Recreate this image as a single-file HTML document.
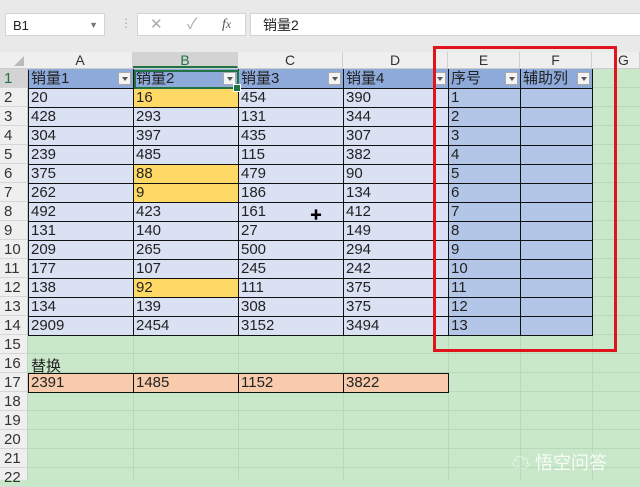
<!DOCTYPE html><html><head><meta charset="utf-8"><style>
body{margin:0;width:640px;height:480px;overflow:hidden;position:relative;background:#c8e8c9;font-family:"Liberation Sans","Noto Sans CJK SC",sans-serif;}
.a{position:absolute}
#top{left:0;top:0;width:640px;height:52px;background:#e9e9e9}
.box{position:absolute;background:#fff;border:1px solid #d4d4d4}
#grid{left:28px;top:69px;width:612px;height:411px;background:repeating-linear-gradient(to bottom,transparent 0,transparent 18px,#b7d8b9 18px,#b7d8b9 19px)}
.vl{position:absolute;top:52px;width:1px;height:428px;background:#b7d8b9}
#colh{left:0;top:52px;width:640px;height:17px;background:#efefef;border-bottom:1px solid #ccc;box-sizing:border-box}
.ch{position:absolute;top:52px;height:16px;line-height:17px;text-align:center;font-size:14px;color:#333;border-right:1px solid #d0d0d0;box-sizing:border-box}
#rowh{left:0;top:69px;width:28px;height:411px;background:#efefef;border-right:1px solid #ccc;box-sizing:border-box}
.rh{position:absolute;left:0;width:27px;height:19px;line-height:19px;font-size:15px;color:#333;text-align:left;padding-left:4px;box-sizing:border-box;border-bottom:1px solid #d6d6d6}
table{position:absolute;left:28px;top:69px;border-collapse:collapse;table-layout:fixed}
td{height:18px;padding:0 0 0 2px;border:1px solid #111;font-size:15px;line-height:18px;color:#222;background:#dae1f3;white-space:nowrap;overflow:hidden;position:relative}
tr.h td{background:#8eaadb;border-color:#8eaadb #111 #111 #111}
td.e{background:#b4c6e7}
td.y{background:#ffd966}
td.o{background:#f8cbad}
.dd{position:absolute;right:2px;top:2px;width:13px;height:13px;background:#f4f4f4;border:1px solid #aaa;box-sizing:border-box}
.dd:after{content:"";position:absolute;left:3px;top:4px;border-left:3px solid transparent;border-right:3px solid transparent;border-top:4px solid #555}
</style></head><body>
<div class="a" id="top"></div>
<div class="box" style="left:5px;top:13px;width:100px;height:23px;font-size:13px;line-height:23px;padding-left:7px;box-sizing:border-box;color:#222">B1<span style="position:absolute;right:6px;top:0;font-size:9px;color:#777">▼</span></div>
<div class="a" style="left:120px;top:16px;color:#aaa;font-size:12px">⋮</div>
<div class="box" style="left:137px;top:13px;width:109px;height:23px;box-sizing:border-box;font-size:15px;color:#aaa;line-height:22px"><span style="position:absolute;left:12px">✕</span><span style="position:absolute;left:49px">✓</span><span style="position:absolute;left:84px;font-family:'Liberation Serif',serif;font-style:italic;color:#555;font-size:14px">f<small>x</small></span></div>
<div class="box" style="left:250px;top:13px;width:400px;height:23px;box-sizing:border-box;font-size:14px;line-height:22px;padding-left:12px;color:#222">销量2</div>
<div class="a" id="grid"></div>
<div class="vl" style="left:133px"></div><div class="vl" style="left:238px"></div><div class="vl" style="left:343px"></div><div class="vl" style="left:448px"></div><div class="vl" style="left:520px"></div><div class="vl" style="left:592px"></div>
<div class="a" id="colh"></div>
<div class="a" style="left:0;top:52px;width:28px;height:16px;background:#efefef"><div style="position:absolute;right:4px;bottom:2px;border-left:10px solid transparent;border-bottom:10px solid #bbb"></div></div>
<div class="ch" style="left:28px;width:105px">A</div>
<div class="ch" style="left:133px;width:105px;background:#d3d3d3;color:#217346;border-bottom:2px solid #217346">B</div>
<div class="ch" style="left:238px;width:105px">C</div>
<div class="ch" style="left:343px;width:105px">D</div>
<div class="ch" style="left:448px;width:72px">E</div>
<div class="ch" style="left:520px;width:72px">F</div>
<div class="ch" style="left:592px;width:48px;text-align:left;padding-left:26px">G</div>
<div class="a" id="rowh">
<div class="rh" style="top:0;color:#217346;background:#d3d3d3">1</div><div class="rh" style="top:19px">2</div><div class="rh" style="top:38px">3</div><div class="rh" style="top:57px">4</div><div class="rh" style="top:76px">5</div><div class="rh" style="top:95px">6</div><div class="rh" style="top:114px">7</div><div class="rh" style="top:133px">8</div><div class="rh" style="top:152px">9</div><div class="rh" style="top:171px">10</div><div class="rh" style="top:190px">11</div><div class="rh" style="top:209px">12</div><div class="rh" style="top:228px">13</div><div class="rh" style="top:247px">14</div><div class="rh" style="top:266px">15</div><div class="rh" style="top:285px">16</div><div class="rh" style="top:304px">17</div><div class="rh" style="top:323px">18</div><div class="rh" style="top:342px">19</div><div class="rh" style="top:361px">20</div><div class="rh" style="top:380px">21</div><div class="rh" style="top:399px">22</div>
</div>
<table>
<colgroup><col style="width:105px"><col style="width:105px"><col style="width:105px"><col style="width:105px"><col style="width:72px"><col style="width:72px"></colgroup>
<tr class="h"><td>销量1<span class="dd"></span></td><td style="outline:2px solid #217346;outline-offset:-2px">销量2<span class="dd"></span></td><td>销量3<span class="dd"></span></td><td>销量4<span class="dd"></span></td><td>序号<span class="dd"></span></td><td>辅助列<span class="dd"></span></td></tr>
<tr><td>20</td><td class="y">16</td><td>454</td><td>390</td><td class="e">1</td><td class="e"></td></tr>
<tr><td>428</td><td>293</td><td>131</td><td>344</td><td class="e">2</td><td class="e"></td></tr>
<tr><td>304</td><td>397</td><td>435</td><td>307</td><td class="e">3</td><td class="e"></td></tr>
<tr><td>239</td><td>485</td><td>115</td><td>382</td><td class="e">4</td><td class="e"></td></tr>
<tr><td>375</td><td class="y">88</td><td>479</td><td>90</td><td class="e">5</td><td class="e"></td></tr>
<tr><td>262</td><td class="y">9</td><td>186</td><td>134</td><td class="e">6</td><td class="e"></td></tr>
<tr><td>492</td><td>423</td><td>161</td><td>412</td><td class="e">7</td><td class="e"></td></tr>
<tr><td>131</td><td>140</td><td>27</td><td>149</td><td class="e">8</td><td class="e"></td></tr>
<tr><td>209</td><td>265</td><td>500</td><td>294</td><td class="e">9</td><td class="e"></td></tr>
<tr><td>177</td><td>107</td><td>245</td><td>242</td><td class="e">10</td><td class="e"></td></tr>
<tr><td>138</td><td class="y">92</td><td>111</td><td>375</td><td class="e">11</td><td class="e"></td></tr>
<tr><td>134</td><td>139</td><td>308</td><td>375</td><td class="e">12</td><td class="e"></td></tr>
<tr><td>2909</td><td>2454</td><td>3152</td><td>3494</td><td class="e">13</td><td class="e"></td></tr>
</table>
<div class="a" style="left:31px;top:355px;font-size:15px;color:#222">替换</div>
<table style="top:373px">
<colgroup><col style="width:105px"><col style="width:105px"><col style="width:105px"><col style="width:105px"></colgroup>
<tr><td class="o">2391</td><td class="o">1485</td><td class="o">1152</td><td class="o">3822</td></tr>
</table>
<div class="a" style="left:233px;top:84px;width:6px;height:6px;background:#217346;border:1px solid #fff"></div>
<div class="a" style="left:310px;top:206px;font-size:12px;color:#000">✚</div>
<div class="a" style="left:433px;top:46px;width:184px;height:306px;border:3px solid #e0141b;box-sizing:border-box"></div>
<div class="a" style="left:512px;top:449px;font-size:18px;color:#fff;opacity:.85">☁ 悟空问答</div>
</body></html>
